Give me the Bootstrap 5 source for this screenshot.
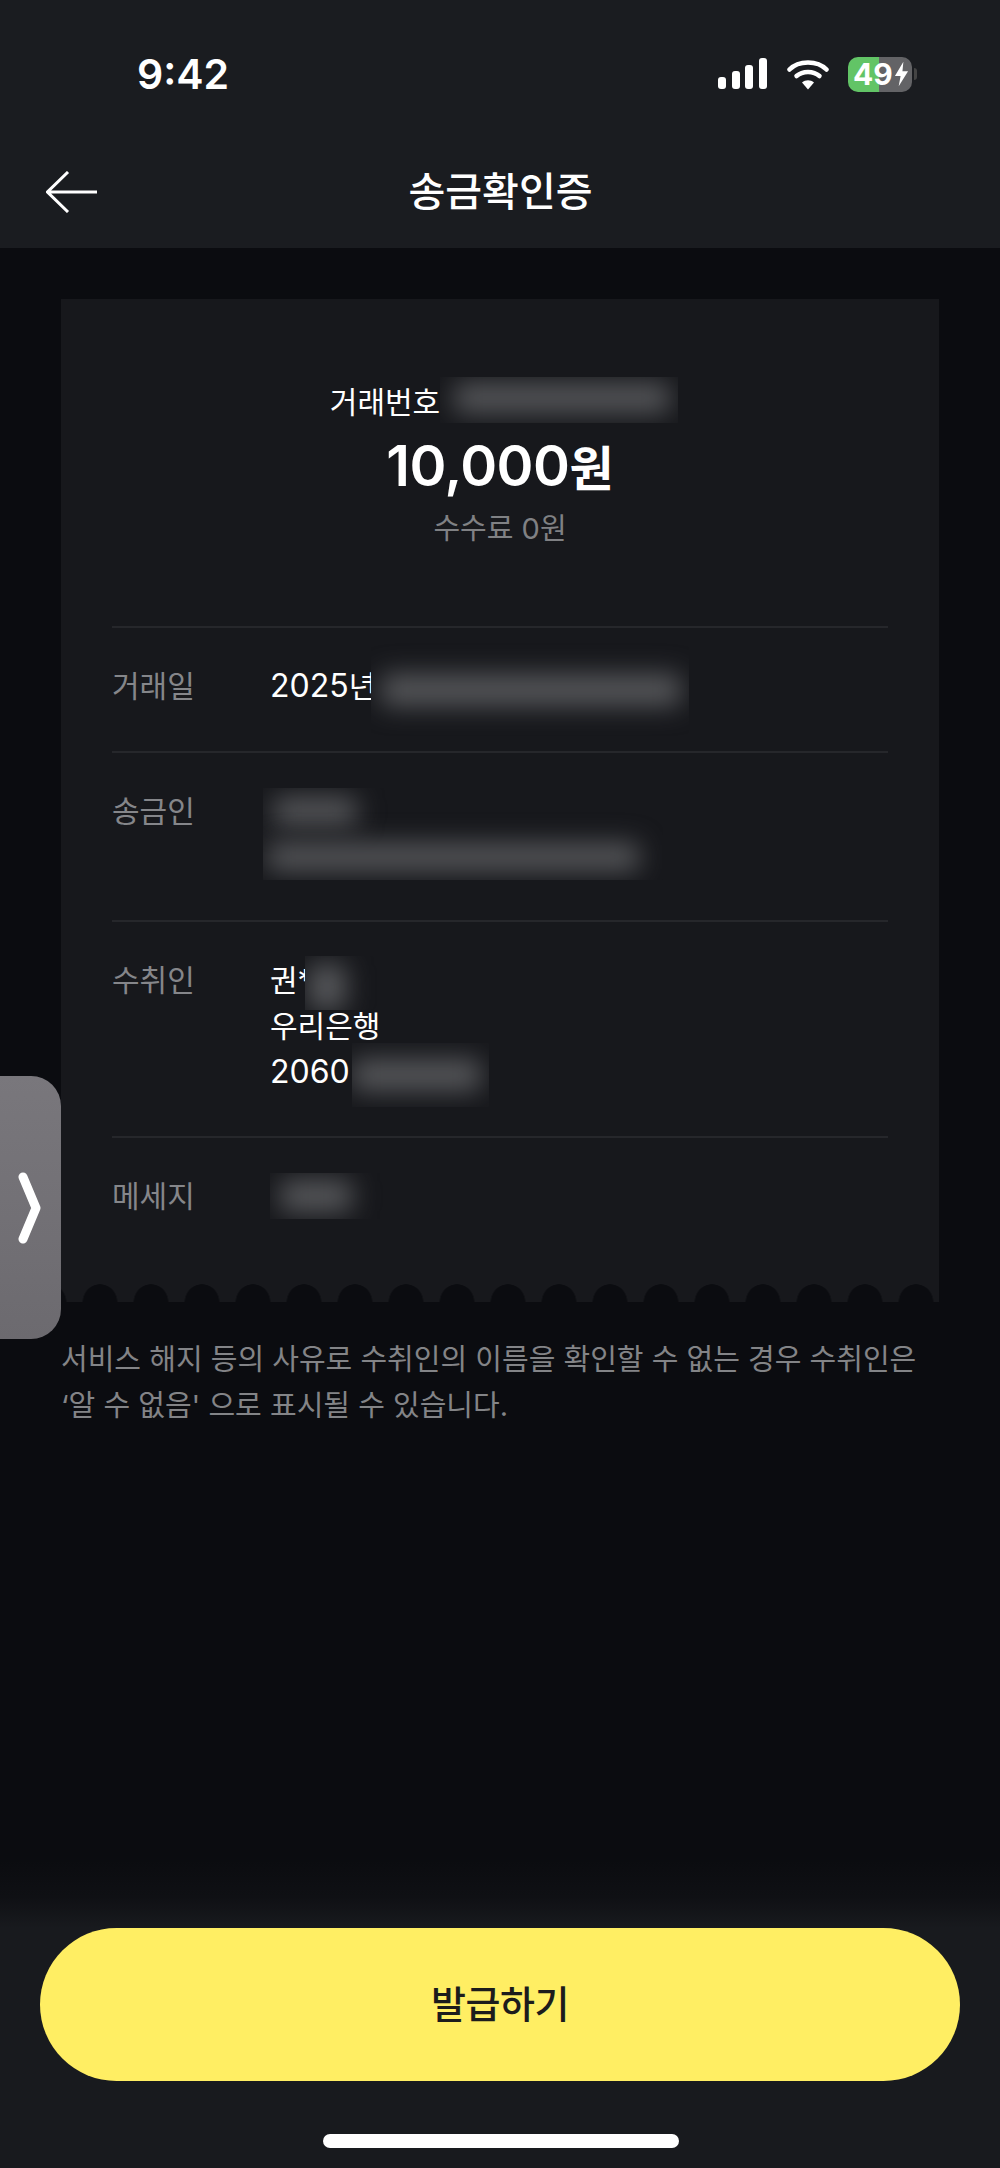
<!doctype html>
<html lang="ko">
<head>
<meta charset="utf-8">
<title>송금확인증</title>
<link href="https://cdn.jsdelivr.net/npm/bootstrap@5.3.0/dist/css/bootstrap.min.css" rel="stylesheet">
<style>
html,body{height:100%;}
body{background:#0b0c10;color:#fff;font-family:Inter,"Noto Sans CJK KR",sans-serif;font-size:30px;line-height:46px;letter-spacing:0;}
.num{font-size:32px;}
.app-head{background:#1a1c20;height:248px;flex:none;}
.status-row{height:108px;padding:40px 83px 0 137px;}
.clock{font-size:41px;font-weight:600;line-height:1;}
.title-row{height:140px;padding:28px 46px 0 46px;}
.page-title{font-size:40px;font-weight:500;line-height:1;flex:1;text-align:center;margin-right:51px;}
.back-btn{flex:none;}
.batt{width:64px;height:35px;border-radius:10px;background:linear-gradient(90deg,#62c466 48.5%,#636366 48.500%);font-size:30px;font-weight:700;line-height:35px;padding-left:5px;}
.bolt{margin-left:1px;}
.batt-nub{width:3px;height:12px;background:#444;border-radius:0 3px 3px 0;margin-left:2px;}
.sig-icon{margin-right:19px;}
.wifi-icon{margin-right:19px;}
.ticket-wrap{padding:51px 61px 0;}
.ticket{background:#17181c;}
.ticket-top{height:327px;padding-top:80px;}
.ref-line{line-height:46px;padding-left:8px;}
.amount{font-size:48px;font-weight:600;line-height:60px;margin-top:11px;}
.amount-num{font-size:56px;letter-spacing:-.5px;}
.fee{color:#808184;font-size:29px;line-height:46px;margin-top:7px;padding-left:0;}
.ticket-rows{padding:0 51px;}
.info-row{border-top:2px solid #26272b;padding:35px 0 39px;display:flex;}
.info-row.mid{padding-bottom:40px;}
.info-row.tall{padding-bottom:41px;}
.info-row.last{padding-bottom:65px;}
.info-label{width:158px;flex:none;color:#85868a;}
.info-val{line-height:46px;white-space:nowrap;}
.veil{display:inline-block;overflow:hidden;vertical-align:middle;background:#17181c;}
.smear{display:block;background:#56575a;filter:blur(13px);border-radius:6px;}
.veil-ref{width:238px;height:46px;padding:6px 8px 8px 0;margin-top:-10px;}
.veil-ref .smear{height:30px;margin-left:14px;}
.veil-date{width:318px;height:94px;padding:32px 8px 30px 10px;margin:-24px 0 -24px -5px;}
.veil-date .smear{height:32px;}
.stack-veil{margin-left:-7px;display:block;width:400px;}
.smear-a{width:84px;height:28px;margin:9px 0 18px 10px;}
.smear-b{width:372px;height:28px;margin:0 0 9px 4px;}
.veil-name{width:75px;height:54px;margin:-8px 0 -8px -8px;}
.veil-name .smear{width:38px;height:46px;margin:8px 0 0 3px;}
.veil-acct{width:137px;height:64px;margin:-12px 0 -12px 2px;padding:16px 8px 16px 0;}
.veil-acct .smear{height:32px;}
.smear-msg{width:72px;height:32px;margin:7px 0 7px 10px;}
.scallops{height:18px;background-image:radial-gradient(ellipse 17.5px 18px at 50% 100%,#0b0c10 97%,transparent 100%);background-size:51px 18px;background-position:13.5px 0;background-repeat:repeat-x;}
.note{color:#838487;font-size:29px;line-height:46px;padding:35px 61px 0;margin:0;white-space:nowrap;}
.side-tab{position:absolute;left:0;top:1076px;width:61px;height:263px;background:linear-gradient(180deg,#79777c,#6c6a6f);border-radius:0 30px 30px 0;padding-right:2px;}
.app-foot{height:308px;flex:none;padding:68px 40px 0;background:linear-gradient(180deg,#0b0c10 0,#0f1014 12%,#181a1e 22%);}
.issue-btn{background:#ffee63;border:0;color:#1c1c1c;border-radius:77px;height:153px;width:100%;font-size:38px;font-weight:500;letter-spacing:-.5px;}
.issue-btn:hover,.issue-btn:active{background:#ffee63!important;color:#1c1c1c!important;}
.home-bar{width:356px;height:14px;border-radius:7px;background:#fff;margin:53px auto 0 auto;position:relative;left:1px;}
</style>
</head>
<body class="d-flex flex-column position-relative overflow-hidden">
<header class="app-head d-flex flex-column">
  <div class="status-row d-flex align-items-center justify-content-between">
    <div class="clock">9:42</div>
    <div class="d-flex align-items-center">
      <svg class="sig-icon" width="50" height="32" viewBox="0 0 50 32"><rect x="0" y="19" width="8" height="12" rx="3" fill="#fff"/><rect x="14" y="13" width="8" height="18" rx="3" fill="#fff"/><rect x="27" y="7" width="8" height="24" rx="3" fill="#fff"/><rect x="41" y="0" width="8" height="31" rx="3" fill="#fff"/></svg>
      <svg class="wifi-icon" width="42" height="31" viewBox="0 0 42 31"><path d="M2.500 10.500C11.500 1 30.500 1 39.500 10.500" fill="none" stroke="#fff" stroke-width="4.500" stroke-linecap="round"/><path d="M9.500 17C15.500 11.500 26.500 11.500 32.500 17" fill="none" stroke="#fff" stroke-width="4.500" stroke-linecap="round"/><path d="M15 23.500C18.500 20.500 23.500 20.500 27 23.500L21 30.500Z" fill="#fff"/></svg>
      <div class="batt d-flex align-items-center"><span>49</span><svg class="bolt" width="15" height="26" viewBox="0 0 16 26"><path d="M10 0 1 15h6l-2 11 10-16H9Z" fill="#fff"/></svg></div>
      <div class="batt-nub"></div>
    </div>
  </div>
  <div class="title-row d-flex align-items-center">
    <svg class="back-btn" width="52" height="42" viewBox="0 0 52 42"><path d="M22 1 1.500 21 22 41M1.500 21H51" fill="none" stroke="#fff" stroke-width="3"/></svg>
    <div class="page-title">송금확인증</div>
  </div>
</header>

<main class="flex-grow-1">
  <div class="ticket-wrap">
    <section class="ticket">
      <div class="ticket-top text-center">
        <div class="ref-line">거래번호<span class="veil veil-ref text-start"><span class="smear"></span></span></div>
        <div class="amount"><span class="amount-num">10,000</span>원</div>
        <div class="fee">수수료 0원</div>
      </div>
      <div class="ticket-rows">
        <div class="info-row">
          <div class="info-label">거래일</div>
          <div class="info-val"><span class="num">2025</span>년<span class="veil veil-date"><span class="smear"></span></span></div>
        </div>
        <div class="info-row mid">
          <div class="info-label">송금인</div>
          <div class="info-val"><span class="veil stack-veil"><span class="smear smear-a"></span><span class="smear smear-b"></span></span></div>
        </div>
        <div class="info-row tall">
          <div class="info-label">수취인</div>
          <div class="info-val">
            <div>권*<span class="veil veil-name"><span class="smear"></span></span></div>
            <div>우리은행</div>
            <div><span class="num">2060</span><span class="veil veil-acct"><span class="smear"></span></span></div>
          </div>
        </div>
        <div class="info-row last">
          <div class="info-label">메세지</div>
          <div class="info-val"><span class="veil d-block" style="width:120px"><span class="smear smear-msg"></span></span></div>
        </div>
      </div>
      <div class="scallops"></div>
    </section>
  </div>
  <p class="note">서비스 해지 등의 사유로 수취인의 이름을 확인할 수 없는 경우 수취인은<br>‘알 수 없음' 으로 표시될 수 있습니다.</p>
</main>

<div class="side-tab d-flex align-items-center justify-content-center">
  <svg width="24" height="72" viewBox="0 0 24 72"><path d="M5 5 18 36 5 67" fill="none" stroke="#fff" stroke-width="9" stroke-linecap="round" stroke-linejoin="round"/></svg>
</div>

<footer class="app-foot">
  <button type="button" class="btn issue-btn">발급하기</button>
  <div class="home-bar"></div>
</footer>
</body>
</html>
